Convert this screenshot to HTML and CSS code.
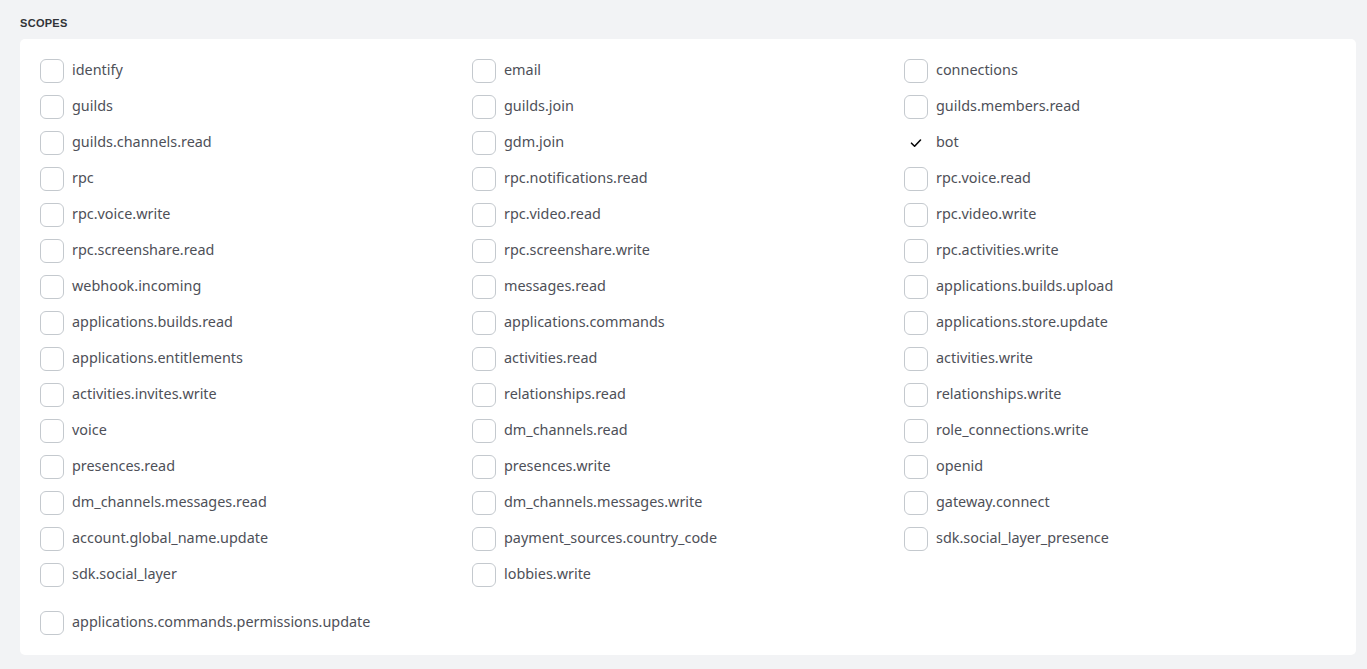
FILE: index.html
```html
<!DOCTYPE html>
<html>
<head>
<meta charset="utf-8">
<link rel="stylesheet" href="styles.css">
</head>
<body>
<div class="page">
  <h2 class="section-title">Scopes</h2>
  <div class="card">
    <div class="grid">
      <label class="scope"><span class="box"></span><span class="name">identify</span></label>
      <label class="scope"><span class="box"></span><span class="name">email</span></label>
      <label class="scope"><span class="box"></span><span class="name">connections</span></label>
      <label class="scope"><span class="box"></span><span class="name">guilds</span></label>
      <label class="scope"><span class="box"></span><span class="name">guilds.join</span></label>
      <label class="scope"><span class="box"></span><span class="name">guilds.members.read</span></label>
      <label class="scope"><span class="box"></span><span class="name">guilds.channels.read</span></label>
      <label class="scope"><span class="box"></span><span class="name">gdm.join</span></label>
      <label class="scope checked"><span class="box"><svg width="12" height="10" viewBox="0 0 12 10"><path d="M1.5 5.2 L4.6 8.2 L10.5 2" fill="none" stroke="#060607" stroke-width="1.6" stroke-linecap="round" stroke-linejoin="round"/></svg></span><span class="name">bot</span></label>
      <label class="scope"><span class="box"></span><span class="name">rpc</span></label>
      <label class="scope"><span class="box"></span><span class="name">rpc.notifications.read</span></label>
      <label class="scope"><span class="box"></span><span class="name">rpc.voice.read</span></label>
      <label class="scope"><span class="box"></span><span class="name">rpc.voice.write</span></label>
      <label class="scope"><span class="box"></span><span class="name">rpc.video.read</span></label>
      <label class="scope"><span class="box"></span><span class="name">rpc.video.write</span></label>
      <label class="scope"><span class="box"></span><span class="name">rpc.screenshare.read</span></label>
      <label class="scope"><span class="box"></span><span class="name">rpc.screenshare.write</span></label>
      <label class="scope"><span class="box"></span><span class="name">rpc.activities.write</span></label>
      <label class="scope"><span class="box"></span><span class="name">webhook.incoming</span></label>
      <label class="scope"><span class="box"></span><span class="name">messages.read</span></label>
      <label class="scope"><span class="box"></span><span class="name">applications.builds.upload</span></label>
      <label class="scope"><span class="box"></span><span class="name">applications.builds.read</span></label>
      <label class="scope"><span class="box"></span><span class="name">applications.commands</span></label>
      <label class="scope"><span class="box"></span><span class="name">applications.store.update</span></label>
      <label class="scope"><span class="box"></span><span class="name">applications.entitlements</span></label>
      <label class="scope"><span class="box"></span><span class="name">activities.read</span></label>
      <label class="scope"><span class="box"></span><span class="name">activities.write</span></label>
      <label class="scope"><span class="box"></span><span class="name">activities.invites.write</span></label>
      <label class="scope"><span class="box"></span><span class="name">relationships.read</span></label>
      <label class="scope"><span class="box"></span><span class="name">relationships.write</span></label>
      <label class="scope"><span class="box"></span><span class="name">voice</span></label>
      <label class="scope"><span class="box"></span><span class="name">dm_channels.read</span></label>
      <label class="scope"><span class="box"></span><span class="name">role_connections.write</span></label>
      <label class="scope"><span class="box"></span><span class="name">presences.read</span></label>
      <label class="scope"><span class="box"></span><span class="name">presences.write</span></label>
      <label class="scope"><span class="box"></span><span class="name">openid</span></label>
      <label class="scope"><span class="box"></span><span class="name">dm_channels.messages.read</span></label>
      <label class="scope"><span class="box"></span><span class="name">dm_channels.messages.write</span></label>
      <label class="scope"><span class="box"></span><span class="name">gateway.connect</span></label>
      <label class="scope"><span class="box"></span><span class="name">account.global_name.update</span></label>
      <label class="scope"><span class="box"></span><span class="name">payment_sources.country_code</span></label>
      <label class="scope"><span class="box"></span><span class="name">sdk.social_layer_presence</span></label>
      <label class="scope"><span class="box"></span><span class="name">sdk.social_layer</span></label>
      <label class="scope"><span class="box"></span><span class="name">lobbies.write</span></label>
    </div>
    <div class="extra">
      <label class="scope"><span class="box"></span><span class="name">applications.commands.permissions.update</span></label>
    </div>
  </div>
</div>
</body>
</html>
```

FILE: styles.css
```css
html, body {
  margin: 0;
  padding: 0;
  background: #f2f3f5;
}
body {
  font-family: "Noto Sans", "Open Sans", sans-serif;
  color: #4e5058;
}
.page {
  padding: 16px 11px 14px 20px;
}
.section-title {
  margin: 0 0 9px 0;
  font-family: "Liberation Sans", Arial, sans-serif;
  font-size: 11px;
  line-height: 14px;
  font-weight: 700;
  text-transform: uppercase;
  letter-spacing: 0.3px;
  color: #313338;
}
.card {
  background: #ffffff;
  border-radius: 5px;
  padding: 14px 20px 14px 20px;
}
.grid {
  display: grid;
  grid-template-columns: repeat(3, 432px);
}
.scope {
  display: flex;
  align-items: center;
  height: 36px;
  gap: 8px;
}
.box {
  width: 24px;
  height: 24px;
  box-sizing: border-box;
  border: 1px solid #c4c9ce;
  border-radius: 6px;
  display: flex;
  align-items: center;
  justify-content: center;
  flex: none;
}
.checked .box {
  border-color: transparent;
}
.name {
  font-size: 14.4px;
  line-height: 20px;
  padding-bottom: 2px;
  color: #4e5058;
}
.extra {
  margin-top: 12px;
}
```
